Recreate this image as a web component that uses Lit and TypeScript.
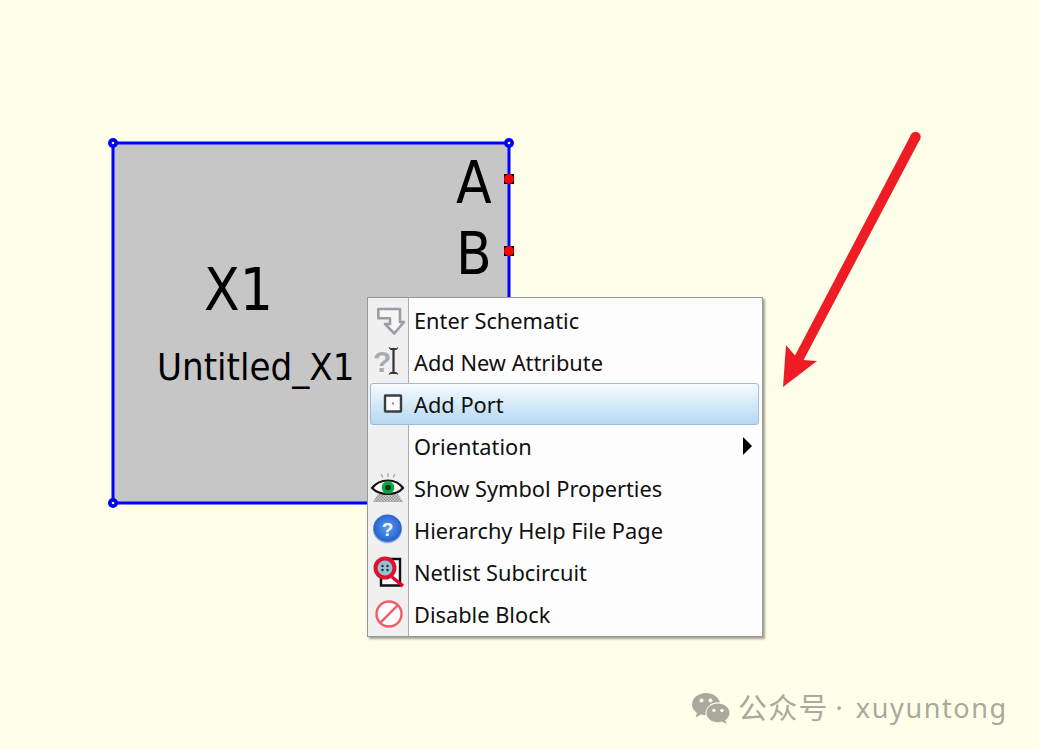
import {LitElement, css, html, svg} from 'lit';
import {customElement} from 'lit/decorators.js';

// icons are drawn in page pixels relative to a 36x36 box
const icons: Record<string, unknown> = {
  enter: svg`<path d="M8.3 7H30V20H34L24.3 31.5L15 22H20V16.3H8.3Z" fill="#f6f6f6" stroke="#9a9ea3" stroke-width="2.6" stroke-linejoin="round"/>`,
  attr: svg`
    <text x="3" y="28" font-family="Liberation Sans, sans-serif" font-size="30" font-weight="700" fill="#a8acb0">?</text>
    <path d="M20 5H27M23.5 5V29M20 29H27" fill="none" stroke="#333" stroke-width="2.2"/>
    <path d="M19 3.5L21 5.5M28 3.5L26 5.5M19 30.5L21 28.5M28 30.5L26 28.5" stroke="#555" stroke-width="1.2"/>`,
  port: svg`
    <rect x="15" y="9.5" width="16" height="16" fill="#fbfbfb" stroke="#3c3f42" stroke-width="2.4" rx="0.5"/>
    <rect x="22" y="16.5" width="2" height="2" fill="#ef5a6a"/>`,
  eye: svg`
    <defs>
      <pattern id="dots" width="3" height="3" patternUnits="userSpaceOnUse">
        <rect width="3" height="3" fill="#d4d4d0"/>
        <rect width="1.5" height="1.5" fill="#8f8f8f"/>
        <rect x="1.5" y="1.5" width="1.5" height="1.5" fill="#8f8f8f"/>
      </pattern>
    </defs>
    <path d="M11 4L13 7.5M18 3V7M25 4L23 7.5" stroke="#a9a9a9" stroke-width="1.3"/>
    <path d="M8 24H28L33 32H3Z" fill="url(#dots)"/>
    <path d="M2 18C10 8 26 8 33 18C26 26 10 26 2 18Z" fill="#fff" stroke="#141414" stroke-width="2.2"/>
    <circle cx="18" cy="17.5" r="6.3" fill="#0aa53f"/>
    <circle cx="18" cy="17.5" r="2.8" fill="#06351a"/>`,
  help: svg`
    <defs>
      <radialGradient id="helpfill" cx="50%" cy="45%" r="55%">
        <stop offset="0%" stop-color="#5c9cf2"/>
        <stop offset="72%" stop-color="#2f6dd6"/>
        <stop offset="84%" stop-color="#2a62c4"/>
        <stop offset="100%" stop-color="#c5d9f5"/>
      </radialGradient>
    </defs>
    <circle cx="17.5" cy="17" r="14.5" fill="url(#helpfill)"/>
    <text x="17.5" y="24" text-anchor="middle" font-family="Liberation Sans, sans-serif" font-size="19" font-weight="700" fill="#f4f8ff">?</text>`,
  netlist: svg`
    <path d="M15 5H30V31.5H11V22" fill="#fff" stroke="#111" stroke-width="2.4"/>
    <path d="M22 23L33 32" stroke="#e4002b" stroke-width="3.4"/>
    <circle cx="15" cy="14" r="9.5" fill="#8fc4d0" stroke="#df1030" stroke-width="4"/>
    <circle cx="12.5" cy="12" r="1.3" fill="#334"/><circle cx="17.5" cy="12" r="1.3" fill="#334"/>
    <circle cx="12.5" cy="16" r="1.3" fill="#334"/><circle cx="17.5" cy="16" r="1.3" fill="#334"/>`,
  disable: svg`
    <circle cx="19" cy="18" r="12.5" fill="#fff" stroke="#f25c68" stroke-width="2.4"/>
    <path d="M10.2 26.8L27.8 9.2" stroke="#f25c68" stroke-width="2.4"/>`,
};

const items = [
  {icon: 'enter', label: 'Enter Schematic'},
  {icon: 'attr', label: 'Add New Attribute'},
  {icon: 'port', label: 'Add Port', active: true},
  {icon: '', label: 'Orientation', submenu: true},
  {icon: 'eye', label: 'Show Symbol Properties'},
  {icon: 'help', label: 'Hierarchy Help File Page'},
  {icon: 'netlist', label: 'Netlist Subcircuit'},
  {icon: 'disable', label: 'Disable Block'},
];

@customElement('app-root')
export class AppRoot extends LitElement {
  static styles = css`
    :host {
      display: block;
      position: relative;
      width: 1039px;
      height: 750px;
      overflow: hidden;
      background: #ffffe9;
      font-family: 'Noto Sans', 'Noto Sans CJK SC', sans-serif;
    }

    .canvas {
      position: absolute;
      inset: 0;
    }

    .symbol-text {
      font-family: 'DejaVu Sans', sans-serif;
      font-stretch: condensed;
      fill: #000;
    }

    .menu {
      position: absolute;
      left: 367px;
      top: 297px;
      width: 396px;
      box-sizing: border-box;
      padding: 1px 3px 1px 2px;
      background: linear-gradient(to right, #f0f0f0 40px, #a9abad 40px, #a9abad 41px, #fdfdfd 41px);
      border: 1px solid #979797;
      box-shadow: 2px 2px 2px rgba(90, 90, 80, 0.55);
    }

    .item {
      display: flex;
      align-items: center;
      height: 42px;
      box-sizing: border-box;
      font-size: 21.8px;
      color: #101010;
    }

    .item.active {
      background: linear-gradient(to bottom, #f6fbfe, #b5d8f3);
      border: 1px solid #9dbcd6;
      border-radius: 3px;
    }

    .icon {
      flex: none;
      width: 36px;
      height: 36px;
      margin-right: 8px;
    }

    .icon svg {
      display: block;
    }

    .active .icon {
      margin-left: -1px;
    }

    .label {
      flex: 1;
      white-space: nowrap;
    }

    .arrow {
      flex: none;
      width: 0;
      height: 0;
      margin-right: 7px;
      border-left: 9px solid #000;
      border-top: 9px solid transparent;
      border-bottom: 9px solid transparent;
    }

    .watermark {
      position: absolute;
      left: 692px;
      top: 690px;
      display: flex;
      align-items: center;
      font-size: 27px;
      line-height: 36px;
      color: #a9a99d;
      white-space: nowrap;
    }

    .watermark svg {
      margin-right: 8px;
    }

    .wm-name {
      font-size: 29px;
      letter-spacing: 1.2px;
    }

    .wm-dot {
      margin: 0 13px 0 7px;
    }

    .wm-id {
      letter-spacing: 1.6px;
    }
  `;

  private renderHandle(x: number, y: number) {
    return svg`
      <circle cx=${x} cy=${y} r="5" fill="#0000ff"/>
      <circle cx=${x} cy=${y} r="1.3" fill="#ffff30"/>`;
  }

  private renderPort(x: number, y: number) {
    return svg`
      <rect x=${x - 5} y=${y - 5} width="10" height="10" fill="#000"/>
      <circle cx=${x} cy=${y} r="5" fill="#ff0000"/>`;
  }

  private renderCanvas() {
    return html`
      <svg class="canvas" width="1039" height="750" viewBox="0 0 1039 750">
        <rect x="113" y="143" width="396" height="360" fill="#c6c6c6" stroke="#0000ff" stroke-width="3"/>
        ${this.renderHandle(113, 143)}
        ${this.renderHandle(509, 143)}
        ${this.renderHandle(113, 503)}
        ${this.renderPort(509, 179)}
        ${this.renderPort(509, 251)}
        <text class="symbol-text" x="456" y="203" font-size="58">A</text>
        <text class="symbol-text" x="456" y="274" font-size="58">B</text>
        <text class="symbol-text" x="204" y="310" font-size="58">X1</text>
        <text class="symbol-text" x="157" y="380" font-size="38">Untitled_X1</text>
        <path d="M920 139.3L911 134.7L795 355.5L786 345L783 387L817 361L803.6 360Z" fill="#ee1c25"/>
        <circle cx="915.5" cy="137" r="5.2" fill="#ee1c25"/>
      </svg>
    `;
  }

  render() {
    return html`
      ${this.renderCanvas()}
      <div class="menu">
        ${items.map(item => html`
          <div class="item ${item.active ? 'active' : ''}">
            <div class="icon">
              ${item.icon ? html`<svg width="36" height="36" viewBox="0 0 36 36">${icons[item.icon]}</svg>` : ''}
            </div>
            <span class="label">${item.label}</span>
            ${item.submenu ? html`<span class="arrow"></span>` : ''}
          </div>
        `)}
      </div>
      <div class="watermark">
        <svg width="38" height="32" viewBox="0 0 38 32">
          <path d="M14 1C6.5 1 0 6 0 12.5C0 16 2 19 5 21L3.5 25.5L9 22.5C10.5 23 12 23.2 13.5 23.2C13 14 21 9 28 10.5C26.5 5 20.5 1 14 1Z" fill="#a9a99d"/>
          <path d="M26 11.5C19.5 11.5 14.5 15.8 14.5 21C14.5 26.3 19.5 30.2 26 30.2C27.4 30.2 28.7 30 30 29.5L34.5 32L33.3 28C36 26 37.5 23.6 37.5 21C37.5 15.8 32.5 11.5 26 11.5Z" fill="#a9a99d"/>
          <circle cx="9.5" cy="8.5" r="2" fill="#ffffe9"/><circle cx="18.5" cy="8.5" r="2" fill="#ffffe9"/>
          <circle cx="22" cy="18.5" r="1.7" fill="#ffffe9"/><circle cx="30" cy="18.5" r="1.7" fill="#ffffe9"/>
        </svg>
        <span class="wm-name">公众号</span>
        <span class="wm-dot">·</span>
        <span class="wm-id">xuyuntong</span>
      </div>
    `;
  }
}
